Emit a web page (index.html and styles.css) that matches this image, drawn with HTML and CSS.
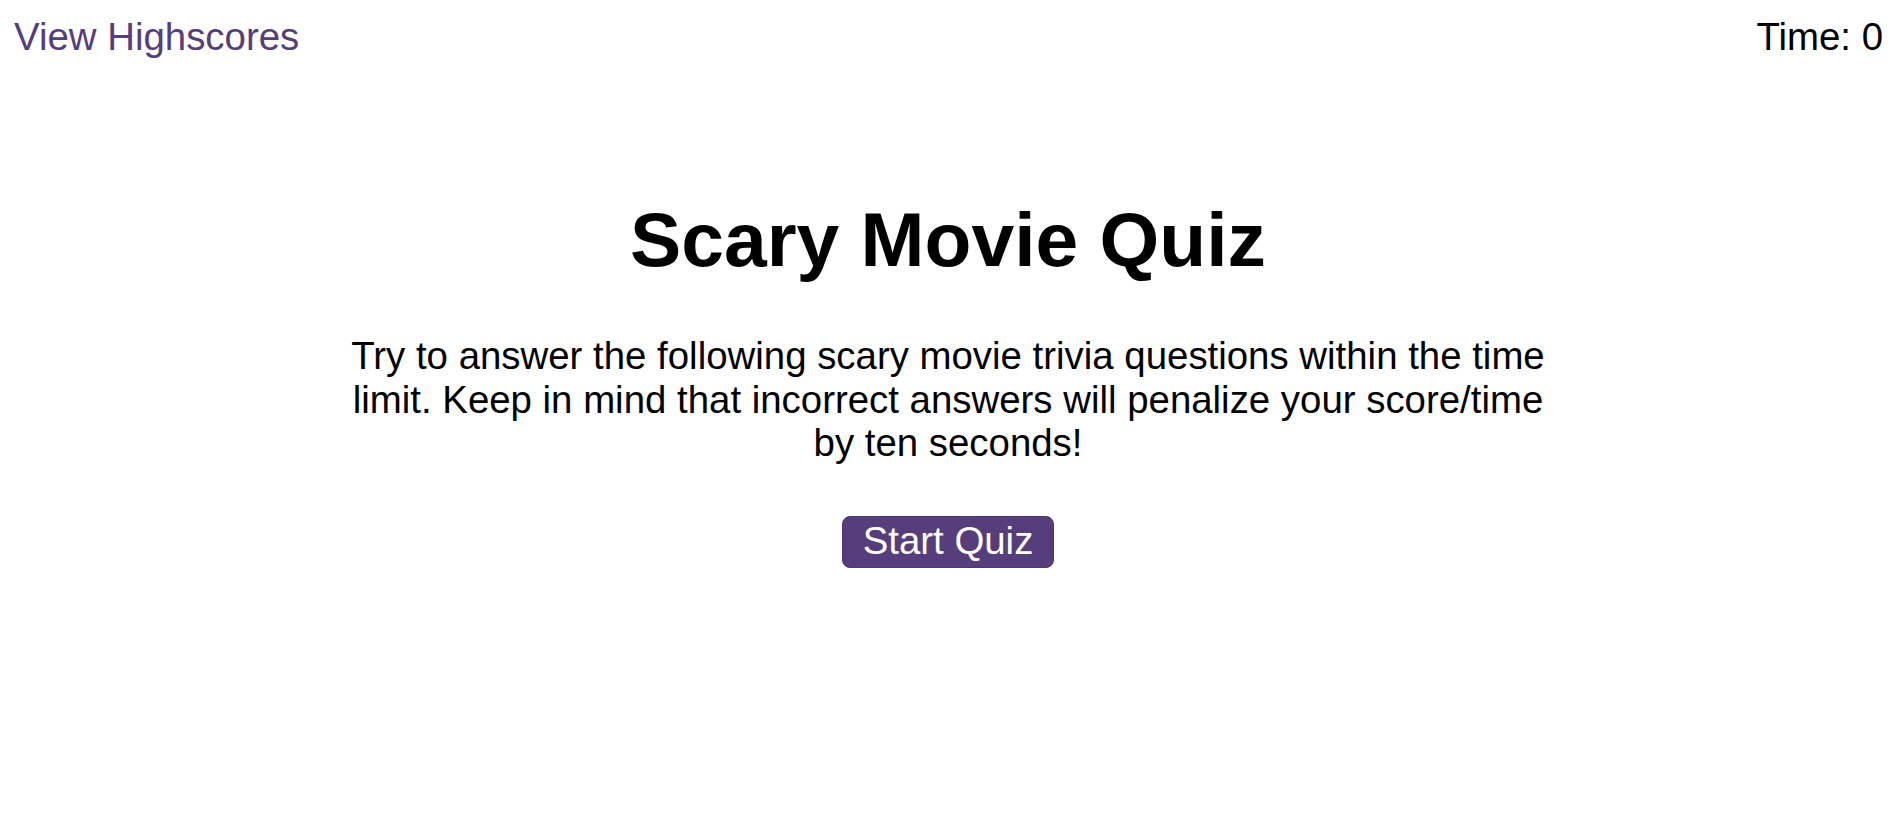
FILE: index.html
```html
<!DOCTYPE html>
<html lang="en">
<head>
<meta charset="utf-8">
<title>Scary Movie Quiz</title>
<link rel="stylesheet" href="styles.css">
</head>
<body>
<header class="topbar">
  <a class="highscores" href="#">View Highscores</a>
  <div class="timer">Time: <span>0</span></div>
</header>
<main class="intro">
  <h1 class="title">Scary Movie Quiz</h1>
  <p class="desc">Try to answer the following scary movie trivia questions within the time limit. Keep in mind that incorrect answers will penalize your score/time by ten seconds!</p>
  <button class="start" type="button">Start Quiz</button>
</main>
</body>
</html>
```

FILE: styles.css
```css
html, body {
  margin: 0;
  padding: 0;
  background: #ffffff;
}

body {
  font-family: "Liberation Sans", Arial, Helvetica, sans-serif;
  font-size: 38.4px;
  color: #000000;
}

.topbar {
  display: flex;
  justify-content: space-between;
  align-items: flex-start;
  padding: 15px 13px 0 14px;
  line-height: 1.149;
}

.highscores {
  color: #563d7c;
  text-decoration: none;
}

.timer {
  color: #000000;
}

.intro {
  display: flex;
  flex-direction: column;
  align-items: center;
  padding-top: 136px;
}

.title {
  margin: 0;
  font-size: 76.8px;
  font-weight: bold;
  line-height: 1.149;
}

.desc {
  margin: 51px 0 0 0;
  max-width: 1240px;
  text-align: center;
  line-height: 43.5px;
}

.start {
  margin-top: 51px;
  font-family: inherit;
  font-size: 38.4px;
  line-height: 1.149;
  color: #ffffff;
  background: #563d7c;
  border: 1px solid #4e3671;
  border-radius: 8px;
  padding: 2px 20px 4px 20px;
  cursor: pointer;
}
```
